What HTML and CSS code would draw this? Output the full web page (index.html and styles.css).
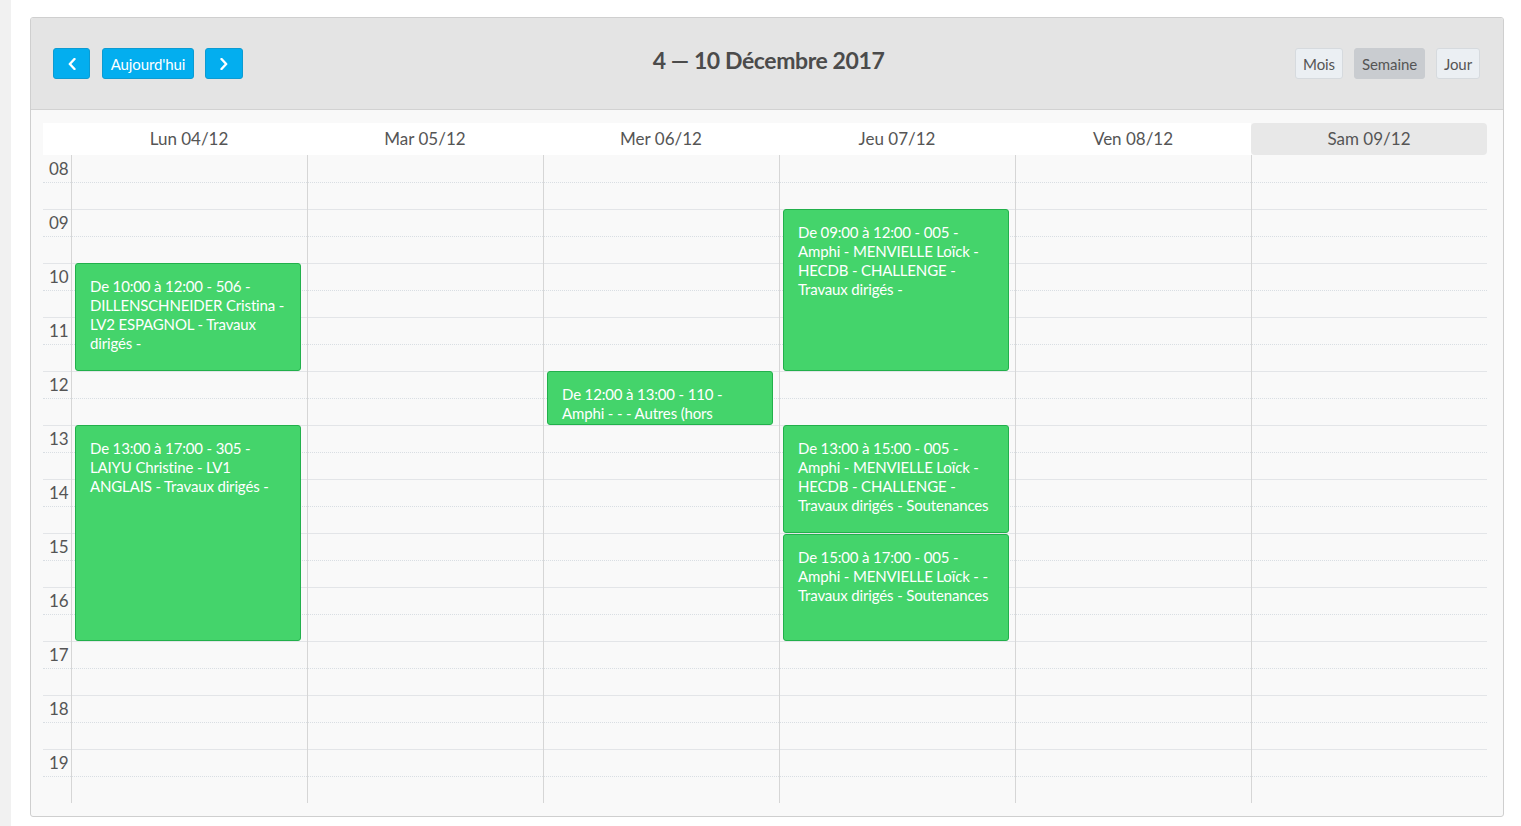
FILE: index.html
```html
<!DOCTYPE html>
<html lang="fr">
<head>
<meta charset="utf-8">
<title>Calendrier</title>
<link rel="stylesheet" href="styles.css">
</head>
<body>
<div class="page">
  <div class="strip"></div>
  <div class="main">
    <div class="cal">
      <div class="toolbar">
        <div class="tb-left">
          <button class="btn btn-blue btn-icon btn-prev" aria-label="Précédent">
            <svg width="8" height="12" viewBox="0 0 8 12"><polyline points="6.5,1 1.8,6 6.5,11" fill="none" stroke="#fff" stroke-width="2.4" stroke-linecap="round" stroke-linejoin="round"/></svg>
          </button>
          <button class="btn btn-blue btn-today">Aujourd'hui</button>
          <button class="btn btn-blue btn-icon btn-next" aria-label="Suivant">
            <svg width="8" height="12" viewBox="0 0 8 12"><polyline points="1.5,1 6.2,6 1.5,11" fill="none" stroke="#fff" stroke-width="2.4" stroke-linecap="round" stroke-linejoin="round"/></svg>
          </button>
        </div>
        <h2 class="title">4 — 10 Décembre 2017</h2>
        <div class="tb-right">
          <button class="btn btn-view">Mois</button>
          <button class="btn btn-view active">Semaine</button>
          <button class="btn btn-view">Jour</button>
        </div>
      </div>
      <div class="body">
        <div class="days">
          <div class="gut-h"></div>
          <div class="day">Lun 04/12</div>
          <div class="day">Mar 05/12</div>
          <div class="day">Mer 06/12</div>
          <div class="day">Jeu 07/12</div>
          <div class="day">Ven 08/12</div>
          <div class="day today">Sam 09/12</div>
        </div>
        <div class="grid">
          <div class="rows">
            <div class="hr"><div class="h1"><span class="lbl">08</span></div><div class="h2"></div></div>
            <div class="hr"><div class="h1"><span class="lbl">09</span></div><div class="h2"></div></div>
            <div class="hr"><div class="h1"><span class="lbl">10</span></div><div class="h2"></div></div>
            <div class="hr"><div class="h1"><span class="lbl">11</span></div><div class="h2"></div></div>
            <div class="hr"><div class="h1"><span class="lbl">12</span></div><div class="h2"></div></div>
            <div class="hr"><div class="h1"><span class="lbl">13</span></div><div class="h2"></div></div>
            <div class="hr"><div class="h1"><span class="lbl">14</span></div><div class="h2"></div></div>
            <div class="hr"><div class="h1"><span class="lbl">15</span></div><div class="h2"></div></div>
            <div class="hr"><div class="h1"><span class="lbl">16</span></div><div class="h2"></div></div>
            <div class="hr"><div class="h1"><span class="lbl">17</span></div><div class="h2"></div></div>
            <div class="hr"><div class="h1"><span class="lbl">18</span></div><div class="h2"></div></div>
            <div class="hr"><div class="h1"><span class="lbl">19</span></div><div class="h2"></div></div>
          </div>
          <div class="cols">
            <div class="gut"></div>
            <div class="col">
              <div class="ev" style="top:108px;height:108px">De 10:00 à 12:00 - 506 - DILLENSCHNEIDER Cristina - LV2 ESPAGNOL - Travaux dirigés -</div>
              <div class="ev" style="top:270px;height:216px">De 13:00 à 17:00 - 305 - LAIYU Christine - LV1 ANGLAIS - Travaux dirigés -</div>
            </div>
            <div class="col"></div>
            <div class="col">
              <div class="ev" style="top:216px;height:54px">De 12:00 à 13:00 - 110 - Amphi - - - Autres (hors enseignement) -</div>
            </div>
            <div class="col">
              <div class="ev" style="top:54px;height:162px">De 09:00 à 12:00 - 005 - Amphi - MENVIELLE Loïck - HECDB - CHALLENGE - Travaux dirigés -</div>
              <div class="ev" style="top:270px;height:108px">De 13:00 à 15:00 - 005 - Amphi - MENVIELLE Loïck - HECDB - CHALLENGE - Travaux dirigés - Soutenances</div>
              <div class="ev" style="top:379px;height:107px">De 15:00 à 17:00 - 005 - Amphi - MENVIELLE Loïck - - Travaux dirigés - Soutenances</div>
            </div>
            <div class="col"></div>
            <div class="col"></div>
          </div>
        </div>
      </div>
    </div>
  </div>
</div>
</body>
</html>
```

FILE: styles.css
```css
html, body {
  margin: 0;
  padding: 0;
  background: #ffffff;
  font-family: "Lato", "Open Sans", "Liberation Sans", sans-serif;
  color: #555;
}

.page {
  display: flex;
  min-height: 826px;
}

.strip {
  width: 11px;
  background: #f1f1f1;
  flex: none;
}

.main {
  flex: 1;
  padding: 17px 17px 0 19px;
}

.cal {
  border: 1px solid #cfcfcf;
  border-radius: 3px;
  background: #f9f9f9;
  width: 1472px;
  overflow: hidden;
}

.toolbar {
  height: 91px;
  background: #e4e4e4;
  border-bottom: 1px solid #d2d2d2;
  display: grid;
  grid-template-columns: 1fr auto 1fr;
  align-items: center;
  padding: 0 23px 0 22px;
}

.tb-left {
  display: flex;
  align-items: center;
}

.btn-today {
  margin: 0 11px 0 12px;
}

.tb-right {
  display: flex;
  gap: 11px;
  justify-content: flex-end;
  align-items: center;
}

.btn {
  height: 31px;
  box-sizing: border-box;
  border-radius: 3px;
  font-family: "Lato", "Open Sans", sans-serif;
  font-size: 15px;
  letter-spacing: -0.1px;
  padding: 0 7px;
  cursor: pointer;
  display: flex;
  align-items: center;
  justify-content: center;
}

.btn-blue {
  background: #03aeef;
  border: 1px solid #0c9bd2;
  color: #fff;
}

.btn-icon {
  width: 37px;
  padding: 0;
}

.btn-next {
  width: 38px;
}

.btn-today {
  width: 92px;
  padding: 0;
}

.btn-view {
  background: #ebeff3;
  border: 1px solid #d6dade;
  color: #555;
}

.btn-view.active {
  background: #c9ccd0;
  border-color: #c9ccd0;
}

.title {
  margin: 0;
  font-size: 23px;
  font-weight: 700;
  letter-spacing: -0.4px;
  color: #4b4b4b;
  position: relative;
  top: -4px;
  left: 2px;
}

.body {
  padding: 13px 16px 13px 12px;
}

.days {
  display: flex;
  height: 32px;
}

.gut-h {
  width: 28px;
  background: #fff;
}

.day {
  flex: 1;
  background: #fff;
  text-align: center;
  line-height: 31px;
  font-size: 17px;
  color: #555;
}

.day.today {
  background: #e8e8e8;
  border-radius: 4px;
}

.grid {
  display: grid;
}

.rows, .cols {
  grid-area: 1 / 1;
}

.hr {
  height: 54px;
  box-sizing: border-box;
  border-top: 1px solid #e3e5e8;
  display: flex;
  flex-direction: column;
}

.hr:first-child {
  border-top-color: transparent;
}

.h1 {
  height: 26px;
  flex: none;
}

.h2 {
  flex: 1;
  border-top: 1px dotted #d9dee3;
}

.lbl {
  display: block;
  padding: 3px 0 0 6px;
  font-size: 17px;
  line-height: 19px;
  color: #555;
}

.cols {
  display: flex;
}

.gut {
  width: 28px;
  flex: none;
}

.col {
  flex: 1;
  border-left: 1px solid #d6d6d6;
  position: relative;
}

.col:first-of-type {
  border-left-color: #e2e4e7;
}

.ev {
  position: absolute;
  left: 3px;
  right: 2.5%;
  box-sizing: border-box;
  background: #44d46b;
  border: 1px solid #22b04b;
  border-radius: 3px;
  color: #fff;
  font-size: 15px;
  letter-spacing: -0.15px;
  line-height: 19px;
  padding: 13px 10px 0 14px;
  overflow: hidden;
}
```
